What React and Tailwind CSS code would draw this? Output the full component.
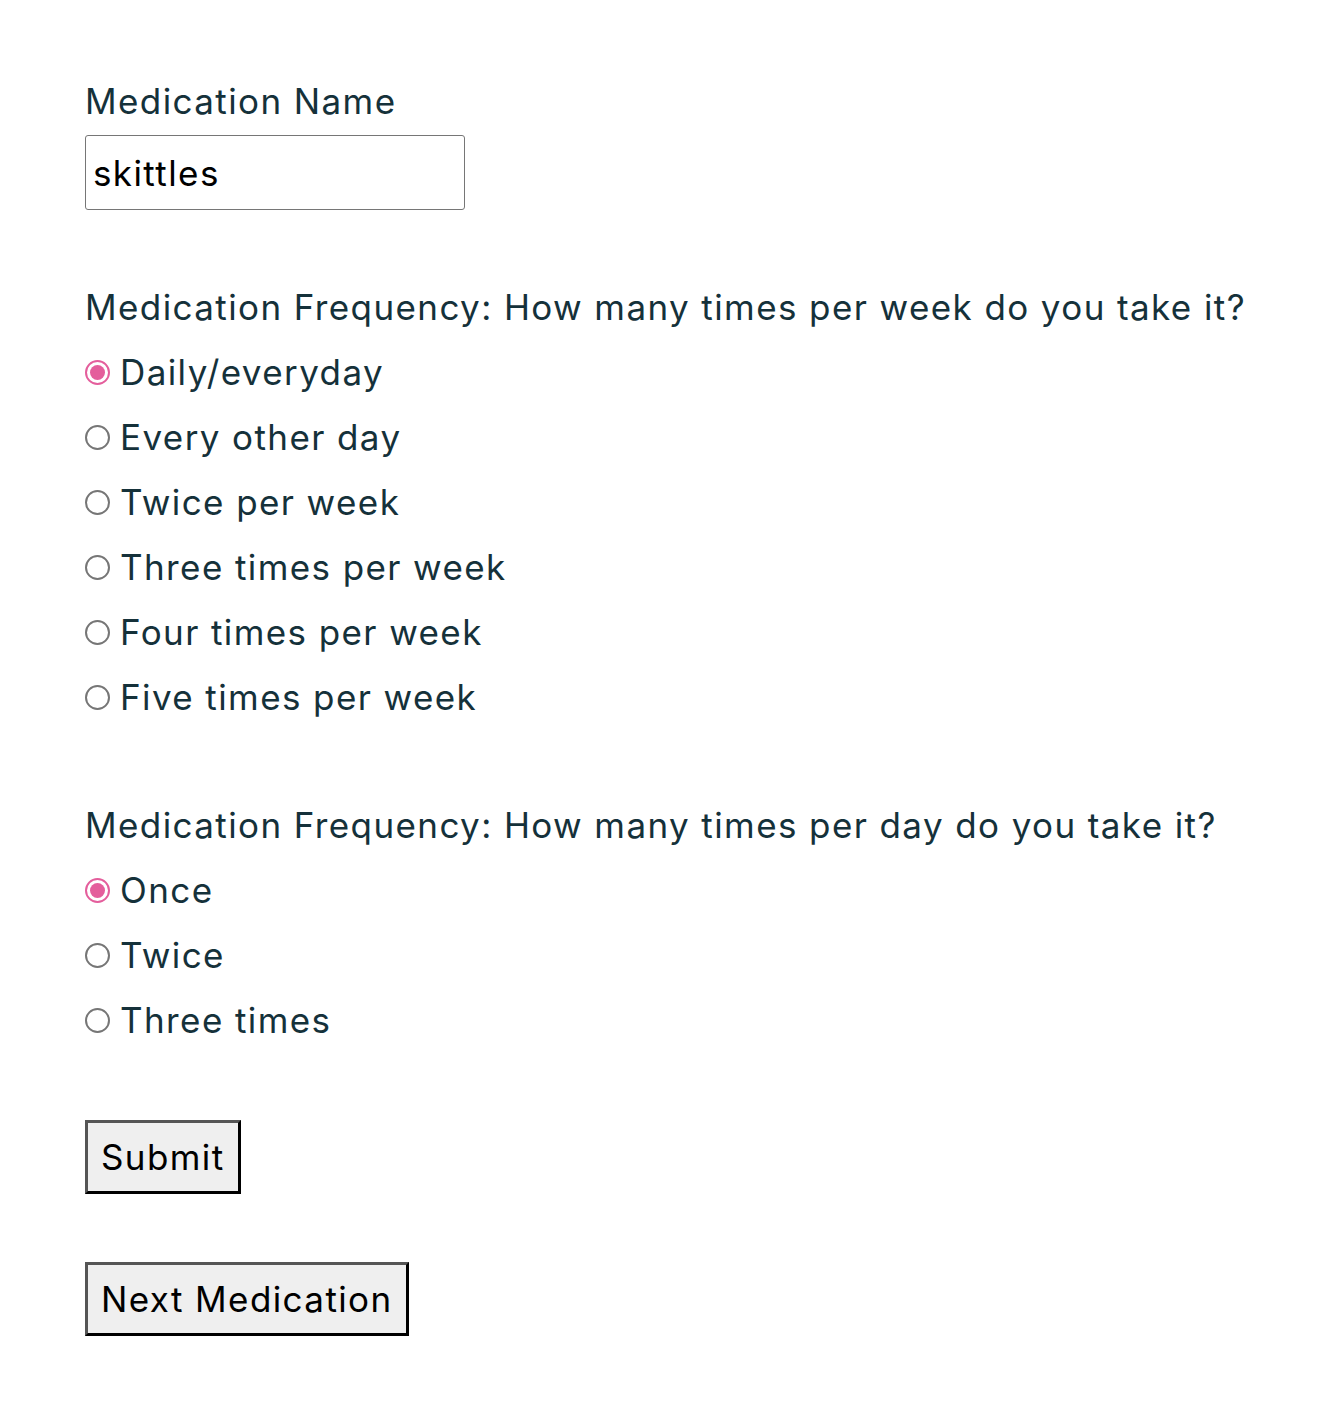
import { useState } from 'react';

const weekOptions = [
  'Daily/everyday',
  'Every other day',
  'Twice per week',
  'Three times per week',
  'Four times per week',
  'Five times per week',
];

const dayOptions = ['Once', 'Twice', 'Three times'];

function Radio({ label, checked, onSelect }) {
  return (
    <label className="flex items-center h-[65px] cursor-pointer" onClick={onSelect}>
      {checked ? (
        <span className="w-[25px] h-[25px] rounded-full border-2 border-[#e45e9c] flex items-center justify-center">
          <span className="w-[15px] h-[15px] rounded-full bg-[#e45e9c]"></span>
        </span>
      ) : (
        <span className="w-[25px] h-[25px] rounded-full border-2 border-[#767676] bg-white"></span>
      )}
      <span className="ml-[10px]">{label}</span>
    </label>
  );
}

export default function App() {
  const [name, setName] = useState('skittles');
  const [perWeek, setPerWeek] = useState(weekOptions[0]);
  const [perDay, setPerDay] = useState(dayOptions[0]);

  return (
    <div className="min-h-screen bg-white pl-[85px] pt-[81px] text-[#15313a] text-[35px] tracking-[1.4px] font-['Inter',sans-serif]">
      <div className="h-[40px] leading-[40px]">Medication Name</div>
      <input
        value={name}
        onChange={e => setName(e.target.value)}
        className="block mt-[14px] w-[380px] h-[75px] border border-[#767676] rounded-[3px] px-[7px] text-black text-[35px] tracking-[1.4px] outline-none"
      />

      <div className="mt-[77px] h-[40px] leading-[40px]">
        Medication Frequency: How many times per week do you take it?
      </div>
      <div className="mt-[13px] flex flex-col">
        {weekOptions.map(opt => (
          <Radio key={opt} label={opt} checked={perWeek === opt} onSelect={() => setPerWeek(opt)} />
        ))}
      </div>

      <div className="mt-[75px] h-[40px] leading-[40px]">
        Medication Frequency: How many times per day do you take it?
      </div>
      <div className="mt-[13px] flex flex-col">
        {dayOptions.map(opt => (
          <Radio key={opt} label={opt} checked={perDay === opt} onSelect={() => setPerDay(opt)} />
        ))}
      </div>

      <div className="mt-[67px]">
        <button className="h-[74px] px-[13px] bg-[#efefef] text-black text-[35px] tracking-[1.4px] border-[3px] border-t-[#555555] border-l-[#555555] border-r-black border-b-black">
          Submit
        </button>
      </div>
      <div className="mt-[68px] pb-[80px]">
        <button className="h-[74px] px-[13px] bg-[#efefef] text-black text-[35px] tracking-[1.4px] border-[3px] border-t-[#555555] border-l-[#555555] border-r-black border-b-black">
          Next Medication
        </button>
      </div>
    </div>
  );
}
